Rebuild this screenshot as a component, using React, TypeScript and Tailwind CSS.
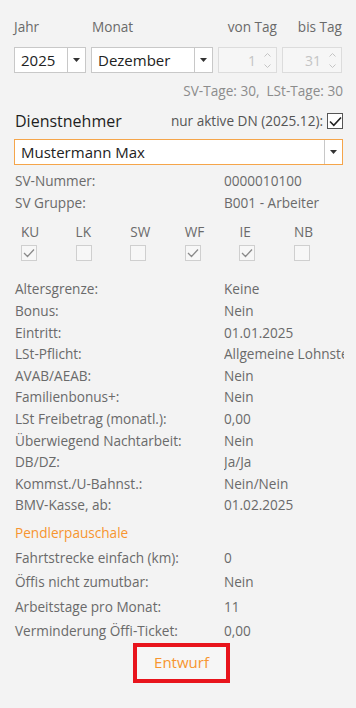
import React from "react";

const Arrow = () => (
  <svg width="7" height="4" viewBox="0 0 7 4">
    <path d="M0 0h7L3.5 4z" fill="#333" />
  </svg>
);

const Combo = ({ value, className }: { value: string; className: string }) => (
  <div className={`flex h-[26px] items-stretch border bg-white ${className}`}>
    <div className="flex flex-1 items-center pl-[6px] text-[15px] text-[#222]">{value}</div>
    <div className="flex w-[18px] items-center justify-center border-l border-[#c8c8c8]">
      <Arrow />
    </div>
  </div>
);

const Spin = ({ value }: { value: string }) => (
  <div className="flex h-[26px] items-center justify-end border border-[#dcdcdc] bg-[#f6f6f6] pr-[5px]">
    <span className="mr-[8px] text-[14px] text-[#c4c4c4]">{value}</span>
    <div className="flex flex-col gap-[7px]">
      <svg width="7" height="4" viewBox="0 0 7 4">
        <path d="M0.5 3.5L3.5 0.5L6.5 3.5" stroke="#c4c4c4" fill="none" />
      </svg>
      <svg width="7" height="4" viewBox="0 0 7 4">
        <path d="M0.5 0.5L3.5 3.5L6.5 0.5" stroke="#c4c4c4" fill="none" />
      </svg>
    </div>
  </div>
);

const Box = ({ checked }: { checked: boolean }) => (
  <div className="flex h-[16px] w-[16px] items-center justify-center border border-[#cfcfcf] bg-[#f7f7f7]">
    {checked && (
      <svg width="12" height="10" viewBox="0 0 12 10">
        <path d="M1 5l3.5 3.5L11 1.5" stroke="#8a8a8a" strokeWidth="1.3" fill="none" />
      </svg>
    )}
  </div>
);

const rows: [string, string][] = [
  ["Altersgrenze:", "Keine"],
  ["Bonus:", "Nein"],
  ["Eintritt:", "01.01.2025"],
  ["LSt-Pflicht:", "Allgemeine Lohnsteuerpflicht"],
  ["AVAB/AEAB:", "Nein"],
  ["Familienbonus+:", "Nein"],
  ["LSt Freibetrag (monatl.):", "0,00"],
  ["Überwiegend Nachtarbeit:", "Nein"],
  ["DB/DZ:", "Ja/Ja"],
  ["Kommst./U-Bahnst.:", "Nein/Nein"],
  ["BMV-Kasse, ab:", "01.02.2025"],
];

const pendler: [string, string][] = [
  ["Fahrtstrecke einfach (km):", "0"],
  ["Öffis nicht zumutbar:", "Nein"],
  ["Arbeitstage pro Monat:", "11"],
  ["Verminderung Öffi-Ticket:", "0,00"],
];

const flags: [string, boolean][] = [
  ["KU", true],
  ["LK", false],
  ["SW", false],
  ["WF", true],
  ["IE", true],
  ["NB", false],
];

export default function App() {
  return (
    <div
      className="h-[708px] w-[356px] bg-[#f3f3f3] pl-[14px] pr-[13px] text-[13.6px] text-[#6a6a6a]"
      style={{ fontFamily: '"Open Sans", "Noto Sans", sans-serif' }}
    >
      <div className="grid grid-cols-[72px_122px_59px_60px] gap-x-[5px] pt-[17px]">
        <div className="h-[22px]">Jahr</div>
        <div className="pl-[1px]">Monat</div>
        <div className="text-right">von Tag</div>
        <div className="text-right">bis Tag</div>
        <div className="mt-[8px]">
          <Combo value="2025" className="border-[#c8c8c8]" />
        </div>
        <div className="mt-[8px]">
          <Combo value="Dezember" className="border-[#c8c8c8]" />
        </div>
        <div className="mt-[8px]">
          <Spin value="1" />
        </div>
        <div className="mt-[8px]">
          <Spin value="31" />
        </div>
      </div>
      <div className="mt-[8px] text-right text-[#8c8c8c]">SV-Tage: 30,&nbsp; LSt-Tage: 30</div>

      <div className="mt-[8px] flex items-center justify-between">
        <span className="pl-[1px] text-[16px] text-[#1e1e1e]">Dienstnehmer</span>
        <div className="flex items-center gap-[4px] text-[#555]">
          <span>nur aktive DN (2025.12):</span>
          <div className="flex h-[16px] w-[16px] items-center justify-center border border-[#555] bg-white">
            <svg width="13" height="11" viewBox="0 0 13 11">
              <path d="M1 5.5l3.8 3.8L12 1.5" stroke="#222" strokeWidth="1.6" fill="none" />
            </svg>
          </div>
        </div>
      </div>
      <div className="mt-[6px]">
        <Combo value="Mustermann Max" className="border-[#f5a54a]" />
      </div>

      <div className="mt-[5px] grid grid-cols-[209px_120px] pl-[1px] leading-[21.5px]">
        <div>SV-Nummer:</div>
        <div>0000010100</div>
        <div>SV Gruppe:</div>
        <div>B001 - Arbeiter</div>
      </div>

      <div className="mt-[10px] grid grid-cols-[repeat(6,54.6px)] pl-[7px]">
        {flags.map(([l, c]) => (
          <div key={l} className="flex flex-col items-start">
            <span className="leading-[18px]">{l}</span>
            <div className="mt-[4px]">
              <Box checked={c} />
            </div>
          </div>
        ))}
      </div>

      <div className="mt-[17px] grid grid-cols-[209px_120px] pl-[1px] leading-[21.6px]">
        {rows.map(([l, v]) => (
          <React.Fragment key={l}>
            <div>{l}</div>
            <div className="overflow-hidden whitespace-nowrap">{v}</div>
          </React.Fragment>
        ))}
      </div>

      <div className="mt-[5px] pl-[1px] leading-[24px] text-[#f7952f]">Pendlerpauschale</div>
      <div className="mt-[1px] grid grid-cols-[209px_120px] pl-[1px] leading-[24.4px]">
        {pendler.map(([l, v]) => (
          <React.Fragment key={l}>
            <div>{l}</div>
            <div>{v}</div>
          </React.Fragment>
        ))}
      </div>

      <div className="-mt-[1px] flex justify-center pl-[6px]">
        <button className="box-border flex h-[40px] w-[97px] items-center justify-center border-[4px] border-[#e8141c] bg-[#f6f6f6] text-[15px] text-[#f7952f]">
          Entwurf
        </button>
      </div>
    </div>
  );
}
